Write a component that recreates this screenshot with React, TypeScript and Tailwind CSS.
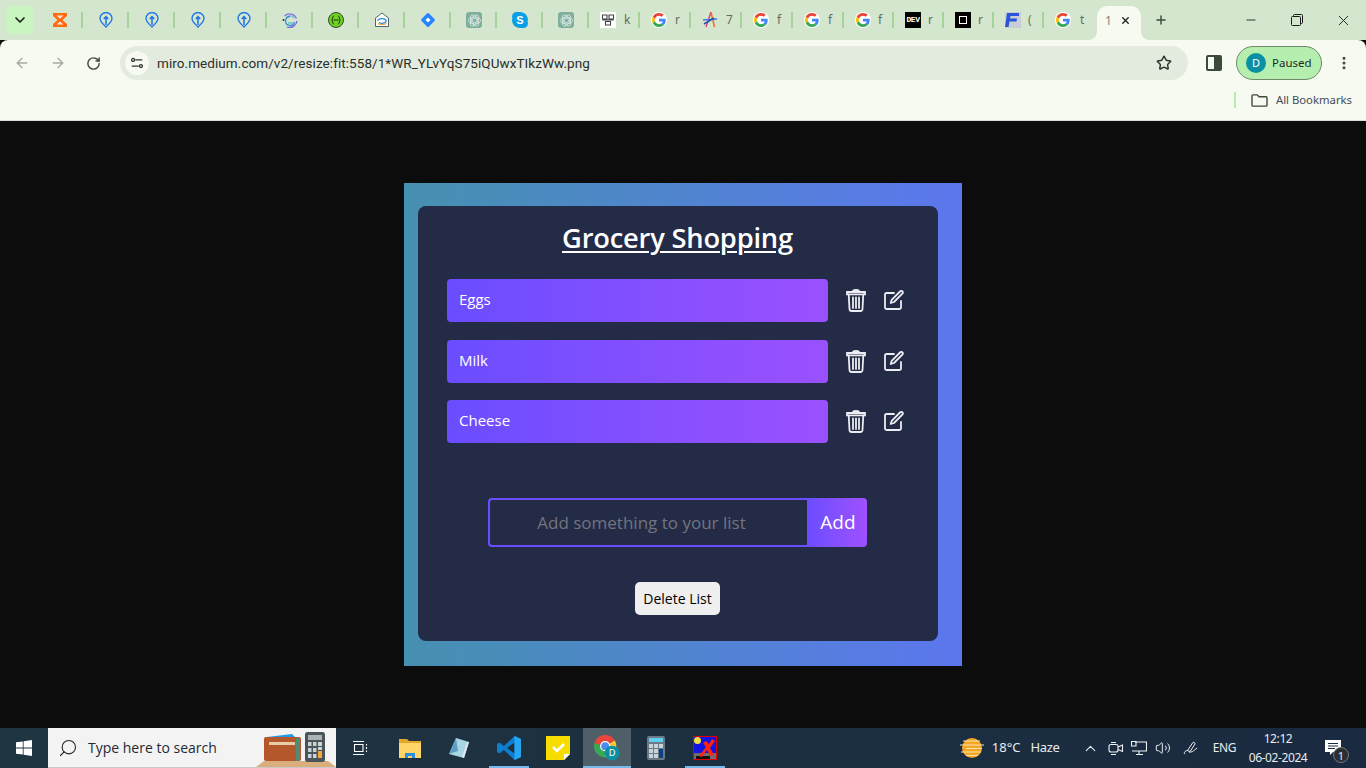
import { ArrowLeft, ArrowRight, ChevronDown, ChevronUp, Minus, MoreVertical, Plus, RotateCw, Search, Star, Volume2, X } from "lucide-react";

const GoogleIcon = () => (
  <span className="flex h-4 w-4 shrink-0 items-center justify-center rounded-full bg-white">
    <svg viewBox="0 0 48 48" className="h-[14px] w-[14px]">
      <path fill="#EA4335" d="M24 9.500c3.500 0 6.700 1.200 9.200 3.600l6.900-6.900C35.900 2.400 30.500 0 24 0 14.600 0 6.500 5.400 2.600 13.200l8 6.200C12.500 13.600 17.800 9.500 24 9.500z" />
      <path fill="#4285F4" d="M46.900 24.500c0-1.600-.1-3.100-.4-4.500H24v9h12.900c-.6 3-2.200 5.400-4.700 7.100l7.700 6c4.500-4.200 7-10.300 7-17.600z" />
      <path fill="#FBBC05" d="M10.500 28.600c-.5-1.400-.8-3-.8-4.600s.3-3.200.8-4.600l-8-6.200C.9 16.500 0 20.100 0 24s.9 7.500 2.600 10.800l7.900-6.200z" />
      <path fill="#34A853" d="M24 48c6.500 0 11.900-2.100 15.900-5.900l-7.700-6c-2.200 1.400-4.900 2.300-8.200 2.300-6.200 0-11.500-4.200-13.400-9.800l-8 6.200C6.500 42.600 14.600 48 24 48z" />
    </svg>
  </span>
);

const PinIcon = () => (
  <svg viewBox="0 0 16 16" className="h-4 w-4" fill="none">
    <path d="M8 15C5 12 2 9.500 2 6.500a6 6 0 0 1 12 0C14 9.500 11 12 8 15z" stroke="#1a73e8" strokeWidth="1.300" />
    <path d="M8 13V5M5.800 7 8 4.600 10.200 7" stroke="#1a73e8" strokeWidth="1.500" />
  </svg>
);

const GptIcon = () => (
  <span className="flex h-4 w-4 items-center justify-center rounded-[3px] bg-[#7fae9f]">
    <svg viewBox="0 0 16 16" className="h-[15px] w-[15px]" fill="none" stroke="#d9e8e1" strokeWidth="0.900">
      <circle cx="8" cy="8" r="2.400" />
      <ellipse cx="8" cy="8" rx="6.500" ry="3.600" />
      <ellipse cx="8" cy="8" rx="6.500" ry="3.600" transform="rotate(60 8 8)" />
      <ellipse cx="8" cy="8" rx="6.500" ry="3.600" transform="rotate(120 8 8)" />
    </svg>
  </span>
);

const narrowIcons = [
  <svg key="hour" viewBox="0 0 16 16" className="h-4 w-4"><path d="M1 1h14v3l-4.500 4 4.500 4v3H1v-3l4.500-4L1 4z" fill="#ff6a13" /><path d="M4.500 3.500h7L8 6.800zM4.500 12.500 8 9.500l3.500 3z" fill="#ffe3cf" /></svg>,
  <PinIcon key="p1" />,
  <PinIcon key="p2" />,
  <PinIcon key="p3" />,
  <PinIcon key="p4" />,
  <svg key="swirl" viewBox="0 0 16 16" className="h-4 w-4" fill="none" strokeWidth="1.300"><path d="M2.500 4a7.500 7.500 0 0 1 12 2.500" stroke="#8e6fe0" /><path d="M15 9a7.500 7.500 0 0 1-10 6" stroke="#7a5fe0" /><path d="M4.500 5.500a5 5 0 0 1 8 1" stroke="#6fb7e8" /><path d="M12.500 10a4.500 4.500 0 1 1-4.500-5.500" stroke="#3b8fd0" /><path d="M6 11h5" stroke="#55c0d8" /><circle cx="1.500" cy="8" r="1" fill="#223" /></svg>,
  <svg key="api" viewBox="0 0 16 16" className="h-4 w-4"><circle cx="8" cy="8" r="7.500" fill="#6fd121" stroke="#2f4a2a" strokeWidth="1" /><path d="M5.800 4C4.300 4 4.800 7.300 3.800 8c1 .7.500 4 2 4M10.200 4c1.500 0 1 3.300 2 4-1 .7-.5 4-2 4M5.500 8h5" fill="none" stroke="#20301c" strokeWidth="1" /></svg>,
  <svg key="mail" viewBox="0 0 16 16" className="h-4 w-4" fill="none"><path d="M1.500 6 8 1l6.500 5v8.500h-13z" fill="#fff" stroke="#2d3e55" strokeWidth="0.800" /><path d="M3.500 8.500c2-2.500 7-2.500 9 0M12.500 8.500c-1 3-5 3.500-7.500 2" stroke="#2b8fd8" strokeWidth="1.300" /><path d="M4 11.500c2 1.300 6 1.300 8.500 0" stroke="#f0a020" strokeWidth="1.200" /></svg>,
  <svg key="jira" viewBox="0 0 16 16" className="h-4 w-4"><rect x="2.700" y="2.700" width="10.600" height="10.600" rx="1.500" transform="rotate(45 8 8)" fill="#2684ff" /><rect x="6.200" y="6.200" width="3.600" height="3.600" transform="rotate(45 8 8)" fill="#fff" /></svg>,
  <GptIcon key="g1" />,
  <svg key="skype" viewBox="0 0 16 16" className="h-4 w-4"><path d="M4.500 0C2 0 0 2 0 4.500c0 .8.200 1.500.5 2.100C.2 7.100 0 7.600 0 8c0 4.400 3.600 8 8 8h3.500C14 16 16 14 16 11.500c0-.8-.2-1.500-.5-2.100.1-.5.500-.9.500-1.400 0-4.400-3.600-8-8-8z" fill="#0a9fe8" /><text x="8" y="12" textAnchor="middle" fontSize="11" fontWeight="700" fill="#fff" fontFamily="Liberation Sans, sans-serif">S</text></svg>,
  <GptIcon key="g2" />,
];

const wideTabs = [
  {
    letter: "k",
    icon: (
      <svg viewBox="0 0 16 16" className="h-4 w-4">
        <rect width="16" height="16" rx="1" fill="#fff" />
        <path d="M2.500 3h4.500v4H2.500zM9 3h4.500v4H9zM5.500 9.500h5V13h-5zM2.500 8h11" fill="none" stroke="#444" strokeWidth="1.100" />
      </svg>
    ),
  },
  { letter: "r", icon: <GoogleIcon /> },
  {
    letter: "7",
    icon: (
      <svg viewBox="0 0 16 16" className="h-4 w-4" fill="none" strokeWidth="1.500">
        <path d="M9 0 4 15" stroke="#e0457b" />
        <path d="M9 0l3.500 15" stroke="#e8702a" />
        <path d="M1 8l14-1" stroke="#3f7de0" />
        <path d="M2 12 12 6" stroke="#2a4fb0" />
      </svg>
    ),
  },
  { letter: "f", icon: <GoogleIcon /> },
  { letter: "f", icon: <GoogleIcon /> },
];

const lastTabs = [
  { letter: "f", icon: <GoogleIcon /> },
  {
    letter: "r",
    icon: (
      <span className="flex h-4 w-4 items-center justify-center bg-black font-['Liberation_Mono',monospace] text-[8px] font-bold leading-none tracking-[-0.5px] text-white">
        DEV
      </span>
    ),
  },
  {
    letter: "r",
    icon: (
      <span className="flex h-4 w-4 items-center justify-center bg-black">
        <span className="h-2 w-2 border border-white" />
      </span>
    ),
  },
  {
    letter: "(",
    icon: (
      <svg viewBox="0 0 16 16" className="h-4 w-4">
        <rect width="16" height="16" fill="#c9cdd6" />
        <path d="M2 1h12v3H5.500L5 6.500h7L11.500 9.500H4.500L3.500 15H0z" fill="#2a55d8" />
      </svg>
    ),
  },
];

const Tabs = () => (
  <div className="flex h-10 items-start bg-[#d5e6ce] pl-[6px] text-[#5f6e5d]">
    <div className="mt-[6px] flex h-7 w-7 items-center justify-center rounded-lg bg-[#c8f5c0]">
      <ChevronDown className="h-4 w-4 text-[#1c1c1c]" strokeWidth={2.500} />
    </div>
    <div className="ml-[3px] flex h-10 items-center">
      {narrowIcons.map((icon, i) => (
        <div key={i} className="flex h-4 w-[46px] items-center justify-center border-r-2 border-[#a5d49a] pl-[2px]">
          {icon}
        </div>
      ))}
      {wideTabs.map((tab, i) => (
        <div key={i} className="flex h-4 w-[51px] items-center border-r-2 border-[#a5d49a] pl-[11px] text-xs">
          {tab.icon}
          <span className="ml-[8px]">{tab.letter}</span>
        </div>
      ))}
      {lastTabs.map((tab, i) => (
        <div key={i} className="flex h-4 w-[50px] items-center border-r-2 border-[#a5d49a] pl-[11px] text-xs">
          {tab.icon}
          <span className="ml-[7px]">{tab.letter}</span>
        </div>
      ))}
      <div className="flex h-4 w-[53px] items-center pl-[11px] text-xs">
        <GoogleIcon />
        <span className="ml-[9px]">t</span>
      </div>
    </div>
    <div className="relative mt-[6px] flex h-[34px] w-[44px] items-start rounded-t-[10px] bg-[#f7faf1] pl-[8px] pt-[6px] text-xs">
      <svg viewBox="0 0 8 8" className="absolute -left-2 bottom-0 h-2 w-2"><path d="M0 8c4 0 8-4 8-8v8z" fill="#f7faf1" /></svg>
      <svg viewBox="0 0 8 8" className="absolute -right-2 bottom-0 h-2 w-2"><path d="M8 8C4 8 0 4 0 0v8z" fill="#f7faf1" /></svg>
      <span className="mt-[1px] text-[#7b8879]">1</span>
      <X className="ml-[8px] mt-[3px] h-[11px] w-[11px] text-[#222]" strokeWidth={3} />
    </div>
    <Plus className="ml-[13px] mt-[13px] h-[14px] w-[14px] text-[#3c4a3a]" strokeWidth={2.500} />
    <div className="ml-auto flex h-10 items-center text-[#1a1a1a]">
      <div className="flex w-[46px] justify-center"><Minus className="h-[14px] w-[14px]" strokeWidth={1.500} /></div>
      <div className="flex w-[46px] justify-center">
        <svg viewBox="0 0 12 12" className="h-3 w-3" fill="none" stroke="#1a1a1a" strokeWidth="1">
          <rect x="0.500" y="2.500" width="9" height="9" rx="1" />
          <path d="M2.500 2.500v-1a1 1 0 0 1 1-1h7a1 1 0 0 1 1 1v7a1 1 0 0 1-1 1h-1" />
        </svg>
      </div>
      <div className="flex w-[46px] justify-center"><X className="h-[17px] w-[17px]" strokeWidth={1.300} /></div>
    </div>
  </div>
);

const Toolbar = () => (
  <div className="h-[81px] rounded-t-lg border-b border-[#dcdfd6] bg-[#f7faf1]">
    <div className="flex h-[46px] items-start pt-[6px]">
      <div className="flex h-[34px] w-[120px] items-center text-[#a3a8a1]">
        <ArrowLeft className="ml-[14px] h-[16px] w-[16px]" strokeWidth={2} />
        <ArrowRight className="ml-[20px] h-[16px] w-[16px]" strokeWidth={2} />
        <RotateCw className="ml-[20px] h-[15px] w-[15px] text-[#3c4a3a]" strokeWidth={2.300} />
      </div>
      <div className="flex h-[34px] w-[1068px] items-center rounded-full bg-[#e3ebdf] pl-[5px] pr-[16px]">
        <div className="flex h-6 w-6 items-center justify-center rounded-full bg-[#f7faf1]">
          <svg viewBox="0 0 16 16" className="h-[14px] w-[14px]" fill="none" stroke="#333" strokeWidth="1.500">
            <path d="M6 4.500h8M2 11.500h8" />
            <circle cx="3.500" cy="4.500" r="1.700" />
            <circle cx="12.500" cy="11.500" r="1.700" />
          </svg>
        </div>
        <span className="ml-[8px] font-['Roboto',sans-serif] text-[13.500px] tracking-[0.07px] text-[#2a2f2a]">
          miro.medium.com/v2/resize:fit:558/1*WR_YLvYqS75iQUwxTIkzWw.png
        </span>
        <Star className="ml-auto h-4 w-4 text-[#333]" strokeWidth={2.200} />
      </div>
      <div className="ml-[18px] mt-[9px] flex h-4 w-[16px] overflow-hidden rounded-[2px] border-2 border-[#3c4a3a]">
        <span className="w-1/2" />
        <span className="w-1/2 bg-[#3c4a3a]" />
      </div>
      <div className="ml-[14px] flex h-[34px] w-[86px] items-center rounded-full border border-[#6f8a6a] bg-[#b5efb0] pl-[9px] text-[11.500px] text-[#1e2b1e]">
        <span className="flex h-5 w-5 items-center justify-center rounded-full bg-[#0b8fa3] text-[11px] text-white">D</span>
        <span className="ml-[6px]">Paused</span>
      </div>
      <MoreVertical className="ml-[14px] mt-[9px] h-4 w-4 text-[#3c4a3a]" strokeWidth={2.500} />
    </div>
    <div className="flex h-[28px] items-center justify-end pr-[14px]">
      <span className="h-4 border-l-2 border-[#b8ebb0]" />
      <svg viewBox="0 0 18 16" className="ml-[15px] h-[15px] w-[17px]" fill="none" stroke="#3c4a3a" strokeWidth="1.500">
        <path d="M1 3a1 1 0 0 1 1-1h4.500l2 2H16a1 1 0 0 1 1 1v8a1 1 0 0 1-1 1H2a1 1 0 0 1-1-1z" />
      </svg>
      <span className="ml-[8px] text-[11.300px] text-[#444a55]">All Bookmarks</span>
    </div>
  </div>
);

const TrashIcon = () => (
  <svg viewBox="0 0 20 23" className="h-[23px] w-5" fill="none" stroke="#ecedf2" strokeWidth="1.800" strokeLinecap="round">
    <path d="M7 2.200c0-1 1-1.200 3-1.200s3 .2 3 1.200M1 3h18v2.300H1z" />
    <path d="M2.700 5.500 3.500 20c.1 1.300.8 2 2 2h9c1.200 0 1.900-.7 2-2l.8-14.500" />
    <path d="M7 8.500V19M10 8.500V19M13 8.500V19" />
  </svg>
);

const EditIcon = () => (
  <svg viewBox="0 0 20 20" className="h-5 w-5" fill="none" stroke="#ecedf2" strokeWidth="1.800" strokeLinecap="round" strokeLinejoin="round">
    <path d="M10 3H2.500C1.500 3 1 3.500 1 4.500v13c0 1 .5 1.500 1.500 1.500h13c1 0 1.500-.5 1.500-1.500V11" />
    <path d="M16 1.500c.8-.8 1.800-.8 2.400-.1s.6 1.600-.1 2.300L10 12l-3.300 1 1-3.200z" />
  </svg>
);

const items = [
  { label: "Eggs", margin: "mb-[18px]" },
  { label: "Milk", margin: "mb-[17px]" },
  { label: "Cheese", margin: "" },
];

const GroceryCard = () => (
  <div className="h-[483px] w-[558px] bg-gradient-to-r from-[#4690b0] to-[#5c76ee] pb-[25px] pl-[14px] pr-[24px] pt-[23px] font-['Open_Sans',sans-serif]">
    <div className="flex h-[435px] flex-col rounded-lg bg-[#232b47] px-[29px] pt-[14px] text-white">
      <h1 className="h-[36px] pr-[1px] text-center text-[27.300px] font-semibold leading-[36px] tracking-[-0.2px] underline decoration-2 underline-offset-[3px]">
        Grocery Shopping
      </h1>
      <ul className="mt-[23px]">
        {items.map((item) => (
          <li key={item.label} className={`flex items-center ${item.margin}`}>
            <div className="flex h-[43px] w-[381px] items-center rounded bg-gradient-to-r from-[#6a4dff] to-[#9b50ff] pb-[2px] pl-3 text-[15px] font-medium">
              {item.label}
            </div>
            <span className="-mt-px ml-[18px] flex"><TrashIcon /></span>
            <span className="-mt-px ml-[18px] flex"><EditIcon /></span>
          </li>
        ))}
      </ul>
      <div className="ml-[41px] mt-[55px] flex h-[49px] w-[379px]">
        <div className="flex w-[319px] items-center justify-center rounded-l border-2 border-r-0 border-[#6a4dff] pr-[14px] text-[17px] text-[#72747e]">
          Add something to your list
        </div>
        <div className="flex w-[60px] items-center justify-center rounded-r bg-gradient-to-r from-[#6a4dff] to-[#9f50ff] pl-[2px] text-[19px]">
          Add
        </div>
      </div>
      <button className="ml-[188px] mt-[35px] h-[33px] w-[85px] rounded-[5px] bg-[#efefef] text-[14px] text-black">
        Delete List
      </button>
    </div>
  </div>
);

const taskApps = [
  {
    underline: "",
    icon: (
      <svg viewBox="0 0 16 16" className="h-4 w-4" fill="none" stroke="#fff" strokeWidth="1.100">
        <path d="M0 1.500h11M0 14.500h11M1.500 4.500h8.500v7H1.500zM13.500 4v1.500M13.500 7v2M13.500 10.500V12" />
      </svg>
    ),
  },
  {
    underline: "",
    icon: (
      <svg viewBox="0 0 22 20" className="h-5 w-[22px]">
        <path d="M0 1h8l2 2h12v4H0z" fill="#e3a72b" />
        <path d="M0 5h22v15H0z" fill="#ffd667" />
        <path d="M6 20v-5h10v5h-3v-2H9v2z" fill="#2f8fdc" />
      </svg>
    ),
  },
  {
    underline: "",
    icon: (
      <svg viewBox="0 0 22 22" className="h-[22px] w-[22px]">
        <path d="M8 1 21 5l-5 16L1 17z" fill="#a9d6e5" />
        <path d="M8 1 1 17l9-3z" fill="#5d9fc0" />
        <path d="M16 21l5-16-2 0-5 15z" fill="#dfe7ea" />
      </svg>
    ),
  },
  {
    underline: "w-[40px]",
    icon: (
      <svg viewBox="0 0 24 24" className="h-6 w-6">
        <path d="M17.500 0 24 3v18l-6.500 3L7 14l-4.500 3.500L0 16V8l2.500-1.500L7 10z" fill="#0e7fd0" />
        <path d="M17.500 6.500v11L10 12z" fill="#1f2f3c" />
        <path d="M17.500 0 24 3v18l-6.500 3z" fill="#26a5f0" />
      </svg>
    ),
  },
  {
    underline: "",
    icon: (
      <svg viewBox="0 0 24 24" className="h-6 w-6">
        <path d="M0 0h24v18l-6 6H0z" fill="#f7dc00" />
        <path d="M18 24v-6h6z" fill="#fff" />
        <path d="m7 11 4 4 7-7" fill="none" stroke="#fff" strokeWidth="2.500" />
      </svg>
    ),
  },
];

const Taskbar = () => (
  <div className="flex h-10 bg-gradient-to-r from-[#1f3540] to-[#1a2a40] font-['Noto_Sans',sans-serif] text-white">
    <div className="flex w-12 items-center justify-center">
      <svg viewBox="0 0 16 16" className="h-4 w-4" fill="#fff">
        <path d="M0 2.300 6.800 1.400v6.200H0zM7.600 1.200 16 0v7.600H7.600zM0 8.400h6.800v6.200L0 13.700zM7.600 8.400H16V16l-8.400-1.200z" />
      </svg>
    </div>
    <div className="relative flex w-[288px] items-center border-b border-[#c8c8c8] bg-[#f3f3f3] text-[#1f2a33]">
      <Search className="ml-[10px] h-5 w-5 -scale-x-100 text-[#222]" strokeWidth={1.300} />
      <span className="ml-[10px] font-['Open_Sans',sans-serif] text-[14px]">Type here to search</span>
      <svg viewBox="0 0 80 36" className="absolute bottom-0 right-0 h-[36px] w-[80px]">
        <path d="M0 36l8-6h64l8 6z" fill="#d9ae7c" />
        <rect x="8" y="6" width="37" height="24" rx="2" fill="#b4572a" />
        <path d="M11 6 36 3l3 3z" fill="#1f9be8" />
        <rect x="13" y="11" width="26" height="3" fill="#e8cda8" />
        <rect x="40" y="7" width="4" height="23" fill="#4f8b78" />
        <rect x="49" y="1" width="20" height="30" rx="2.500" fill="#4b5459" />
        <rect x="52" y="4" width="14" height="5" fill="#a9b3b5" />
        <path d="M52 11h3.500v4H52zM57 11h3.500v4H57zM62 11h4v4h-4zM62 16h4v3h-4zM52 17h3.500v4H52zM57 17h3.500v4H57zM52 23h3.500v4H52zM57 23h3.500v4H57z" fill="#c9d4d6" />
        <rect x="62" y="20" width="4" height="7" fill="#f0a93a" />
      </svg>
    </div>
    {taskApps.map((app, i) => (
      <div key={i} className="relative flex w-[49.400px] items-center justify-center">
        {app.icon}
        {app.underline && <span className={`absolute bottom-0 left-[5px] h-[2px] ${app.underline} bg-[#76b9ed]`} />}
      </div>
    ))}
    <div className="relative flex w-[48px] items-center justify-center bg-[#4e5f68]">
      <svg viewBox="0 0 28 28" className="h-[26px] w-[26px]">
        <path d="M12 12 22.400 6A12 12 0 0 0 .4 9z" fill="#e8453c" />
        <path d="M12 12 .4 9A12 12 0 0 0 12 24z" fill="#3aa757" />
        <path d="M12 12V24A12 12 0 0 0 22.400 6z" fill="#fcc934" />
        <circle cx="12" cy="12" r="5.500" fill="#fff" />
        <circle cx="12" cy="12" r="4.200" fill="#4a8cf0" />
        <circle cx="19.500" cy="19.500" r="8" fill="#0b8fa3" />
        <text x="19.500" y="23" textAnchor="middle" fontSize="10" fill="#fff" fontFamily="Noto Sans, sans-serif">D</text>
      </svg>
      <span className="absolute bottom-0 left-0 h-[2px] w-full bg-[#76b9ed]" />
    </div>
    <div className="flex w-[50px] items-center justify-center">
      <svg viewBox="0 0 18 24" className="h-6 w-[18px]">
        <rect width="18" height="24" rx="2" fill="#6b7a86" />
        <rect x="2" y="2" width="14" height="4" fill="#5cd0ee" />
        <path d="M2 8h4v4H2zM7 8h4v4H7zM12 8h4v4h-4zM2 13h4v4H2zM7 13h4v4H7zM2 18h4v4H2zM7 18h4v4H7z" fill="#c8d3da" />
        <rect x="12" y="13" width="4" height="9" fill="#0e3f80" />
      </svg>
    </div>
    <div className="relative flex w-[49px] items-center justify-center">
      <svg viewBox="0 0 24 24" className="h-6 w-6">
        <rect width="24" height="24" fill="#e00000" />
        <rect x="1" y="1" width="22" height="22" fill="#1414e0" />
        <path d="M1 17h22v6H1z" fill="#6e6e6e" />
        <path d="M3 20h14v3H3z" fill="#111" />
        <circle cx="4.500" cy="4.500" r="3.500" fill="#f2e03a" />
        <path d="M6 20 13 11 10 7l3-2 3 3 3-5 3 2-5 7 4 7-4 1-3-6-5 7z" fill="#ff2410" />
      </svg>
      <span className="absolute bottom-0 left-[4px] h-[2px] w-[40px] bg-[#76b9ed]" />
    </div>
    <div className="ml-auto flex items-center text-[13px] text-[#e8ecef]">
      <svg viewBox="0 0 24 22" className="h-[22px] w-6">
        <circle cx="12" cy="11" r="10" fill="#f5a623" />
        <path d="M3 4h17M0 8h24M6 11.500h16M1 15h20M6 18.500h12" stroke="#f8e3b0" strokeWidth="1.200" />
      </svg>
      <span className="ml-[8px]">18°C</span>
      <span className="ml-[10px] tracking-[-0.3px]">Haze</span>
      <ChevronUp className="ml-[22px] h-[17px] w-[17px]" strokeWidth={1.500} />
      <svg viewBox="0 0 16 16" className="ml-[9px] h-4 w-4" fill="none" stroke="#f2f4f6" strokeWidth="1.100">
        <rect x="1" y="4.500" width="9" height="7.500" rx="2" />
        <path d="m10 7 4.500-2v6.500L10 9.500M3 2.500h5M3 14.500h5" />
      </svg>
      <svg viewBox="0 0 16 16" className="ml-[7px] h-4 w-4" fill="none" stroke="#f2f4f6" strokeWidth="1.100">
        <path d="M4 2h11.500v9H1M8 11v3M5 14.500h7M.5 1.500h4.500V6H.5z" />
      </svg>
      <Volume2 className="ml-[8px] h-4 w-4" strokeWidth={1.500} />
      <svg viewBox="0 0 18 16" className="ml-[12px] h-4 w-4" fill="none" stroke="#f2f4f6" strokeWidth="1.100">
        <path d="M2 15c-2-2 2-5 3.500-4M5 11l6-9c1-1 3 0 2.500 1.500L8 12zM7 13c2-1 3 0 5-2 1-1 3-2 4-3" />
      </svg>
      <span className="ml-[14px] text-[12px] tracking-[-0.4px]">ENG</span>
      <div className="ml-[6px] flex w-[72px] flex-col items-center text-[12px] leading-[19px] tracking-[-0.4px]">
        <span>12:12</span>
        <span>06-02-2024</span>
      </div>
      <div className="relative ml-[9px] mr-[23px] flex w-[20px] justify-center">
        <svg viewBox="0 0 16 16" className="h-4 w-4" fill="#fff">
          <path d="M0 0h16v12H8l-3 3v-3H0z" />
          <path d="M3 3.500h10M3 6h10M3 8.500h7" stroke="#1a2a40" strokeWidth="1" />
        </svg>
        <span className="absolute left-[10px] top-[7px] flex h-4 w-4 items-center justify-center rounded-full border border-[#777] bg-[#2b2f33] text-[11px] leading-none">1</span>
      </div>
    </div>
  </div>
);

export default function App() {
  return (
    <div className="flex h-screen flex-col overflow-hidden bg-[#0c0c0c] font-['Noto_Sans',sans-serif]">
      <Tabs />
      <Toolbar />
      <main className="flex h-[607px] items-center justify-center bg-[#0c0c0c]">
        <GroceryCard />
      </main>
      <Taskbar />
    </div>
  );
}
